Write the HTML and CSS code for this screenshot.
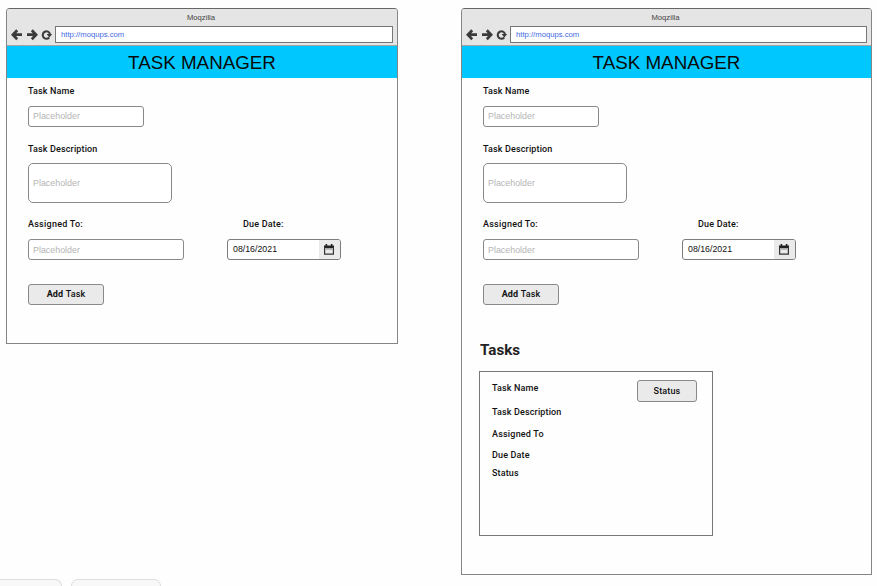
FILE: index.html
```
<!DOCTYPE html>
<html lang="en">
<head>
<meta charset="utf-8">
<title>Task Manager</title>
<link rel="stylesheet" href="styles.css">
</head>
<body>
<svg class="defs" width="0" height="0">
  <symbol id="arrow" viewBox="0 0 12 12"><path d="M6.2 1.2 1.9 5.7l4.3 4.5M2.3 5.7H11" fill="none" stroke="#3b3b3b" stroke-width="2.7"/></symbol>
  <symbol id="reload" viewBox="0 0 12 12"><path d="M8.2 8.5A3.7 3.7 0 1 1 9 5" fill="none" stroke="#3b3b3b" stroke-width="2.1"/><path d="M5.6 5h5.6L8.4 8.4z" fill="#3b3b3b"/></symbol>
  <symbol id="calendar" viewBox="0 0 10 11"><path d="M0 1.5h10V4H0zM1.6 0h1.6v2H1.6zM6.8 0h1.6v2H6.8z" fill="#222"/><path d="M.6 3v7.2h8.8V3" fill="none" stroke="#333" stroke-width="1.2"/><path d="M1.2 4h7.6v1.7H1.2z" fill="#aaa"/></symbol>
</svg>
<main class="board">
  <section class="window window-small">
    <header class="chrome">
      <div class="chrome-title">Moqzilla</div>
      <div class="toolbar">
        <svg class="nav"><use href="#arrow"/></svg>
        <svg class="nav forward"><use href="#arrow"/></svg>
        <svg class="nav"><use href="#reload"/></svg>
        <div class="url">http://moqups.com</div>
      </div>
    </header>
    <h1 class="banner">TASK MANAGER</h1>
    <div class="form">
      <div class="label">Task Name</div>
      <div class="field name">Placeholder</div>
      <div class="label">Task Description</div>
      <div class="field description">Placeholder</div>
      <div class="row">
        <div class="assignee"><div class="label assignee-label">Assigned To:</div><div class="field">Placeholder</div></div>
        <div class="due"><div class="label due-label">Due Date:</div><div class="date"><span class="value">08/16/2021</span><span class="picker"><svg><use href="#calendar"/></svg></span></div></div>
      </div>
      <div class="button add"><b>Add</b>&nbsp;Task</div>
    </div>
  </section>
  <section class="window window-large">
    <header class="chrome">
      <div class="chrome-title">Moqzilla</div>
      <div class="toolbar">
        <svg class="nav"><use href="#arrow"/></svg>
        <svg class="nav forward"><use href="#arrow"/></svg>
        <svg class="nav"><use href="#reload"/></svg>
        <div class="url">http://moqups.com</div>
      </div>
    </header>
    <h1 class="banner">TASK MANAGER</h1>
    <div class="form">
      <div class="label">Task Name</div>
      <div class="field name">Placeholder</div>
      <div class="label">Task Description</div>
      <div class="field description">Placeholder</div>
      <div class="row">
        <div class="assignee"><div class="label assignee-label">Assigned To:</div><div class="field">Placeholder</div></div>
        <div class="due"><div class="label due-label">Due Date:</div><div class="date"><span class="value">08/16/2021</span><span class="picker"><svg><use href="#calendar"/></svg></span></div></div>
      </div>
      <div class="button add"><b>Add</b>&nbsp;Task</div>
    </div>
    <h2 class="tasks-title">Tasks</h2>
    <div class="card">
      <div class="details">
        <div class="label line-name">Task Name</div>
        <div class="label line-description">Task Description</div>
        <div class="label line-assignee">Assigned To</div>
        <div class="label line-due">Due Date</div>
        <div class="label line-status">Status</div>
      </div>
      <div class="button status">Status</div>
    </div>
  </section>
</main>
<footer class="tabs"><div class="tab tab-first"></div><div class="tab"></div></footer>
</body>
</html>
```
FILE: styles.css
```
* { box-sizing: border-box; }
body {
  margin: 0;
  width: 877px;
  height: 586px;
  overflow: hidden;
  background: #fefefe;
  color: #111;
  font-family: "Liberation Sans", sans-serif;
}
.defs { display: block; }
.board {
  display: flex;
  align-items: flex-start;
  gap: 63px;
  height: 579px;
  padding: 8px 0 0 6px;
}
.window {
  flex: none;
  border: 1px solid #858585;
  border-top-color: #666;
  border-radius: 4px 4px 0 0;
  overflow: hidden;
}
.window-small { width: 392px; height: 336px; }
.window-large { width: 411px; height: 567px; }
.chrome {
  height: 37px;
  background: #e5e5e5;
  border-bottom: 1px solid #a5a5a5;
}
.chrome-title {
  height: 17px;
  padding-right: 2px;
  line-height: 17px;
  text-align: center;
  font-size: 7.7px;
  color: #444;
}
.toolbar {
  display: flex;
  align-items: center;
  height: 17px;
  padding: 0 4px;
}
.nav { flex: none; width: 12px; height: 12px; margin-right: 3px; }
.forward { transform: scaleX(-1); }
.url {
  flex: 1;
  height: 17px;
  margin-left: -1px;
  padding-left: 5px;
  border: 1px solid #777;
  background: #fff;
  color: #4169e1;
  font-size: 7.7px;
  line-height: 15px;
}
.banner {
  height: 32px;
  margin: 0;
  background: #00c8ff;
  color: #0a0a0a;
  font-size: 18.8px;
  font-weight: 400;
  line-height: 33px;
  text-align: center;
}
.form { padding: 7px 20px 0 21px; }
.label {
  height: 12px;
  font-family: Roboto, sans-serif;
  font-size: 9px;
  font-weight: 500;
  letter-spacing: .14px;
  line-height: 12px;
  white-space: nowrap;
}
.field {
  display: flex;
  align-items: center;
  height: 21px;
  padding-left: 4px;
  border: 1px solid #898989;
  border-radius: 3px;
  background: #fff;
  color: #b5b5b5;
  font-size: 8.9px;
}
.name { width: 116px; margin: 9px 0 16px; padding-bottom: 2px; }
.description { width: 144px; height: 40px; margin: 8px 0 15px; border-radius: 5px; }
.row { display: flex; gap: 43px; }
.assignee { width: 156px; }
.assignee-label { letter-spacing: .25px; }
.assignee .field { margin-top: 9px; }
.due { width: 114px; }
.due-label { padding-left: 16px; letter-spacing: .18px; }
.date {
  display: flex;
  align-items: center;
  justify-content: space-between;
  height: 21px;
  margin-top: 9px;
  padding-left: 5px;
  border: 1px solid #7c7c7c;
  border-radius: 3px;
  background: #fff;
  font-size: 8.8px;
  overflow: hidden;
}
.value { padding-bottom: 2px; }
.picker {
  display: flex;
  align-items: center;
  justify-content: center;
  width: 21px;
  height: 19px;
  padding-right: 2px;
  background: #eaeaea;
}
.picker svg { width: 10px; height: 11px; }
.button {
  display: flex;
  align-items: center;
  justify-content: center;
  border: 1px solid #898989;
  border-radius: 3px;
  background: #eaeaea;
  font-family: Roboto, sans-serif;
  font-size: 9px;
  font-weight: 500;
  letter-spacing: .14px;
}
.add { width: 76px; height: 21px; margin-top: 24px; padding-bottom: 1px; }
.tasks-title {
  height: 20px;
  margin: 35px 0 0 18px;
  color: #222;
  font-family: Roboto, sans-serif;
  font-size: 15.2px;
  font-weight: 700;
  line-height: 20px;
}
.card {
  display: flex;
  justify-content: space-between;
  width: 234px;
  height: 165px;
  margin: 11px 0 0 17px;
  padding: 0 15px 0 12px;
  border: 1px solid #777;
}
.details { padding-top: 10px; }
.line-description { margin-top: 12px; }
.line-assignee { margin-top: 10px; letter-spacing: .2px; }
.line-due { margin-top: 9px; }
.line-status { margin-top: 6px; }
.status { width: 60px; height: 22px; margin-top: 8px; }
.tabs { display: flex; gap: 9px; height: 7px; overflow: hidden; }
.tab {
  flex: none;
  width: 90px;
  height: 20px;
  border: 1px solid #dcdcdc;
  border-radius: 7px;
  background: #f8f8f8;
}
.tab-first { width: 62px; border-left: 0; border-top-left-radius: 0; }
```
